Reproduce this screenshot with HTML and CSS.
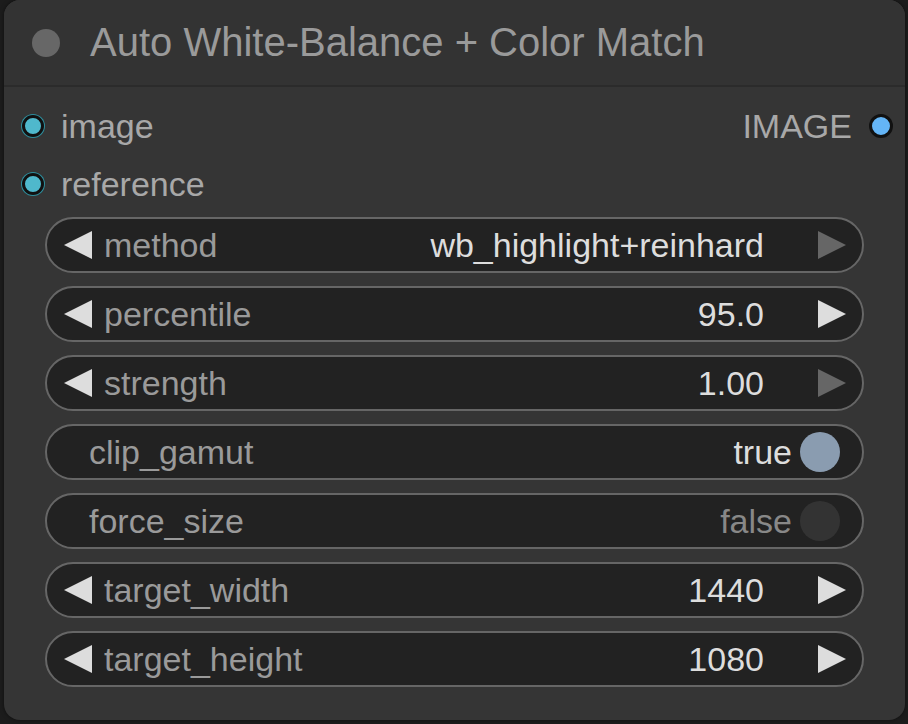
FILE: index.html
```html
<!DOCTYPE html>
<html>
<head>
<meta charset="utf-8">
<link rel="stylesheet" href="styles.css">
</head>
<body>
<div class="node">
  <div class="title">
    <span class="title-dot"></span>
    <span class="title-text">Auto White-Balance + Color Match</span>
  </div>
  <div class="body">
    <div class="slot-row">
      <div class="slot in"><span class="dot in-dot"></span><span>image</span></div>
      <div class="slot out"><span>IMAGE</span><span class="dot out-dot"></span></div>
    </div>
    <div class="slot-row">
      <div class="slot in"><span class="dot in-dot"></span><span>reference</span></div>
    </div>
    <div class="widgets">
      <div class="widget">
        <svg class="arrow" viewBox="0 0 28 28"><polygon points="28,0 28,28 0,14"/></svg>
        <span class="label">method</span>
        <span class="value">wb_highlight+reinhard</span>
        <svg class="arrow dim" viewBox="0 0 28 28"><polygon points="0,0 0,28 28,14"/></svg>
      </div>
      <div class="widget">
        <svg class="arrow" viewBox="0 0 28 28"><polygon points="28,0 28,28 0,14"/></svg>
        <span class="label">percentile</span>
        <span class="value">95.0</span>
        <svg class="arrow" viewBox="0 0 28 28"><polygon points="0,0 0,28 28,14"/></svg>
      </div>
      <div class="widget">
        <svg class="arrow" viewBox="0 0 28 28"><polygon points="28,0 28,28 0,14"/></svg>
        <span class="label">strength</span>
        <span class="value">1.00</span>
        <svg class="arrow dim" viewBox="0 0 28 28"><polygon points="0,0 0,28 28,14"/></svg>
      </div>
      <div class="widget toggle">
        <span class="label">clip_gamut</span>
        <span class="value">true</span>
        <span class="knob on"></span>
      </div>
      <div class="widget toggle">
        <span class="label">force_size</span>
        <span class="value off">false</span>
        <span class="knob"></span>
      </div>
      <div class="widget">
        <svg class="arrow" viewBox="0 0 28 28"><polygon points="28,0 28,28 0,14"/></svg>
        <span class="label">target_width</span>
        <span class="value">1440</span>
        <svg class="arrow" viewBox="0 0 28 28"><polygon points="0,0 0,28 28,14"/></svg>
      </div>
      <div class="widget">
        <svg class="arrow" viewBox="0 0 28 28"><polygon points="28,0 28,28 0,14"/></svg>
        <span class="label">target_height</span>
        <span class="value">1080</span>
        <svg class="arrow" viewBox="0 0 28 28"><polygon points="0,0 0,28 28,14"/></svg>
      </div>
    </div>
  </div>
</div>
</body>
</html>
```
FILE: styles.css
```css
* { box-sizing: border-box; }
html, body {
  margin: 0;
  padding: 0;
  background: #1c1c1c;
  width: 908px;
  height: 724px;
  overflow: hidden;
  font-family: "Liberation Sans", Arial, sans-serif;
}
.node {
  margin-left: 4px;
  width: 901px;
  height: 720px;
  background: #353535;
  border-radius: 16px;
  overflow: hidden;
  box-shadow: 0 0 4px rgba(0,0,0,0.5);
}
.title {
  height: 87px;
  background: #333333;
  border-bottom: 2px solid #2b2b2b;
  display: flex;
  align-items: center;
  padding-left: 28px;
}
.title-dot {
  width: 28px;
  height: 28px;
  border-radius: 50%;
  background: #676767;
  margin-right: 30px;
}
.title-text {
  color: #9a9a9a;
  font-size: 40px;
  margin-top: 0px;
}
.body {
  padding: 10px 0 0 0;
}
.slot-row {
  height: 58px;
  display: flex;
  align-items: center;
  justify-content: space-between;
}
.slot {
  display: flex;
  align-items: center;
  color: #a8a8a8;
  font-size: 34px;
}
.slot.in { padding-left: 18px; }
.slot.out { padding-right: 12px; }
.dot {
  width: 22px;
  height: 22px;
  border-radius: 50%;
  border: 3px solid #111;
}
.in-dot {
  background: #4fb8cc;
  box-shadow: 0 0 0 1px #2d8d9c;
  margin-right: 17px;
}
.out-dot {
  width: 24px;
  height: 24px;
  background: #64b5f6;
  margin-left: 17px;
}
.widgets {
  margin-top: 4px;
  padding: 0 41px 0 41px;
  display: flex;
  flex-direction: column;
  gap: 13px;
}
.widget {
  height: 56px;
  background: #222222;
  border: 2px solid #666666;
  border-radius: 28px;
  display: flex;
  align-items: center;
  padding: 0 16px 0 17px;
  font-size: 34px;
}
.arrow {
  width: 28px;
  height: 28px;
  fill: #dddddd;
  flex: none;
}
.arrow.dim { fill: #666666; }
.label {
  color: #9a9a9a;
  margin-left: 12px;
  flex: 1;
}
.value {
  color: #dddddd;
  margin-right: 54px;
}
.toggle { padding-left: 42px; padding-right: 22px; }
.toggle .label { margin-left: 0; }
.toggle .value { margin-right: 8px; }
.value.off { color: #888888; }
.knob {
  width: 40px;
  height: 40px;
  border-radius: 50%;
  background: #333333;
}
.knob.on { background: #8a9cb0; }
```
